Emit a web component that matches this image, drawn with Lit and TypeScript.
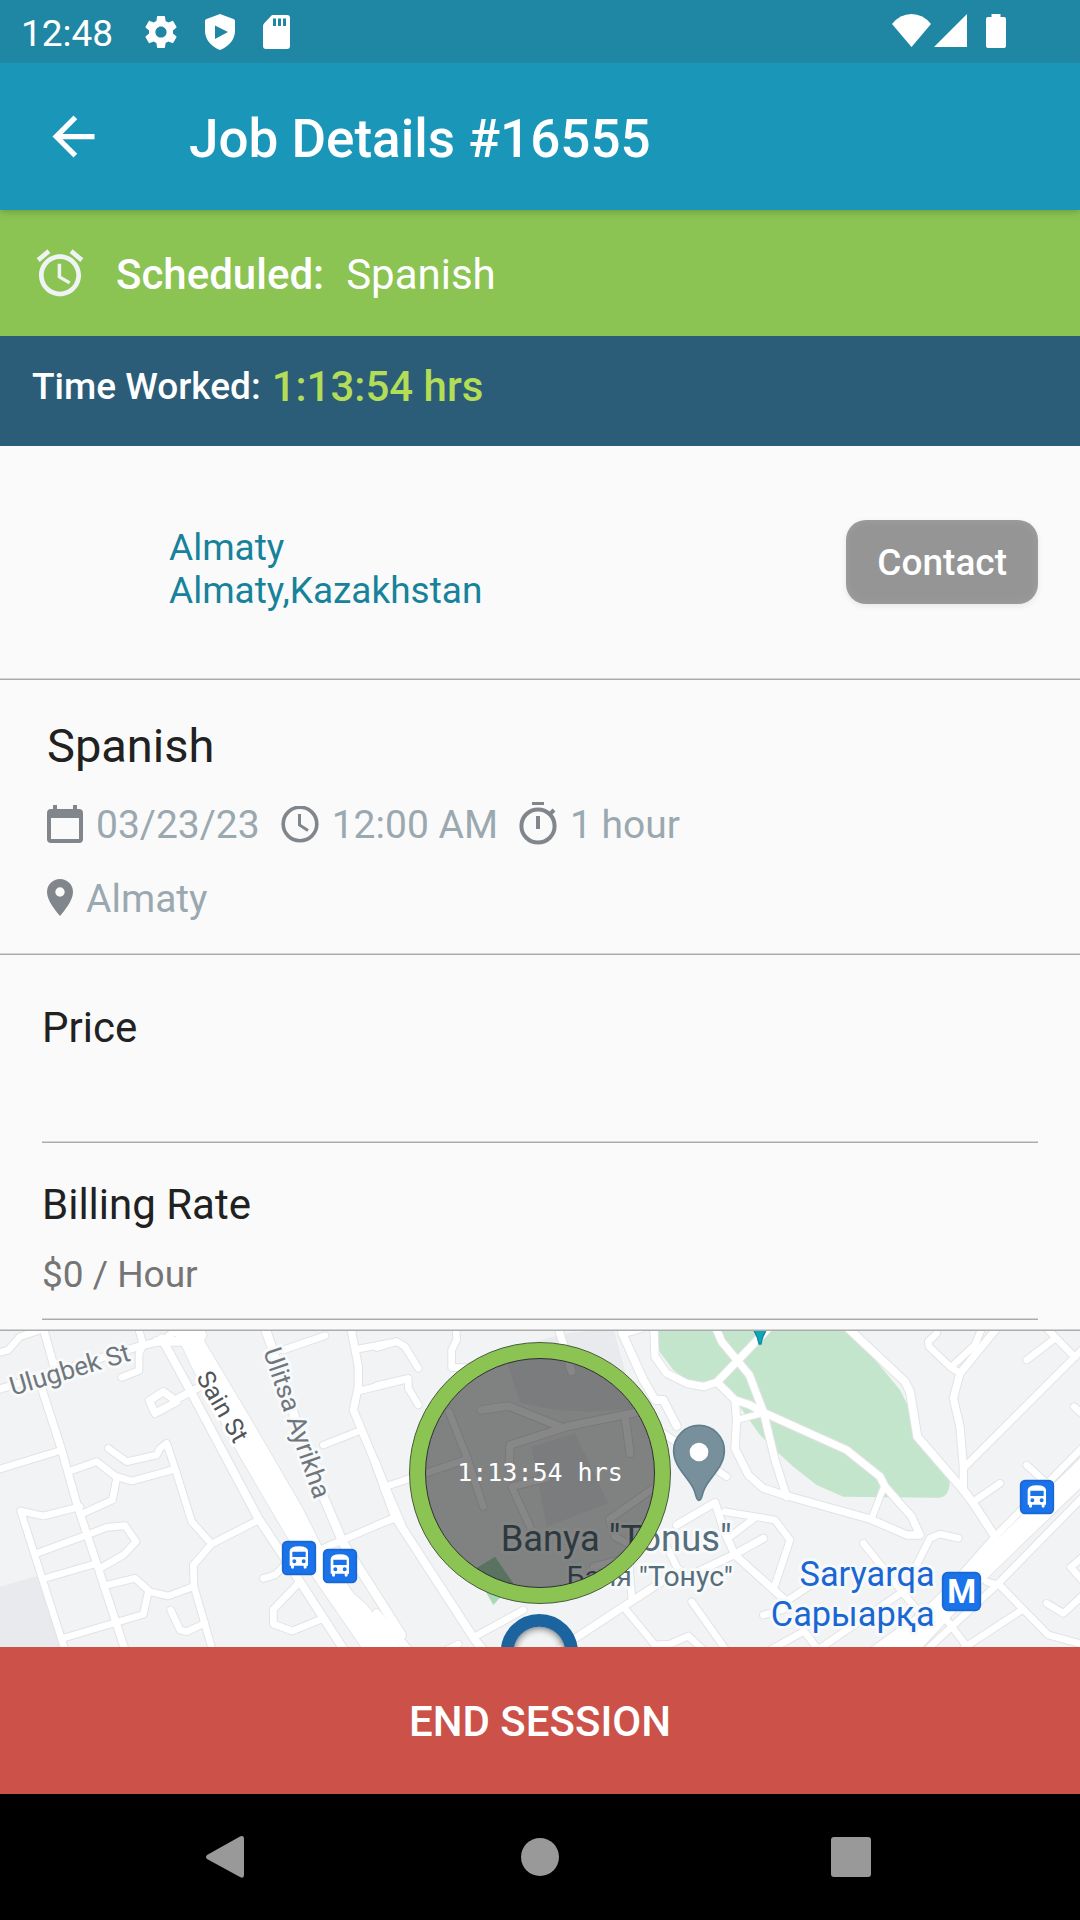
import { LitElement, html, svg, css } from "lit";
import { customElement, property } from "lit/decorators.js";

/* Streets are drawn on a 3240 x 948 grid, in three sheets with their own x origin. */
type Road = [width: number, d: string];
interface Sheet {
  dx: number;
  roads: Road[];
}

const SHEETS: Sheet[] = [
  {
    dx: 0,
    roads: [
      [20, "M-10 100 L25 90 L60 50 L115 32"],
      [22, "M130 25 L165 150 M125 205 L185 390 L230 550 L290 730 L375 990"],
      [22, "M-10 210 L420 78 L490 62 L530 30"],
      [20, "M415 25 L430 75 L417 100 L417 152 L365 172"],
      [24, "M485 55 L570 210 L775 595 L900 785 L1032 990"],
      [26, "M470 64 L560 64"],
      [22, "M600 200 L525 240 L490 215 L448 242 L465 280 L530 245"],
      [20, "M-10 450 L180 392"],
      [20, "M205 455 L290 425 L345 468 L395 483 L525 448"],
      [20, "M325 385 L380 425 L470 405 L480 385 L500 370 L525 445 L575 605 L635 672 L580 735 L582 800 L637 990"],
      [20, "M350 475 L337 540 L250 580"],
      [20, "M240 560 L130 588 L62 573 L195 990"],
      [20, "M110 700 L265 643 L320 622 L375 617 L408 665 L370 705 L300 745"],
      [20, "M135 775 L290 730"],
      [20, "M310 798 L405 775 L450 815 L505 828 L580 800"],
      [20, "M445 815 L430 883 L195 953"],
      [20, "M512 870 L540 930 L560 935 L615 910"],
      [20, "M635 672 L775 600"],
      [20, "M790 775 L825 765 L850 740"],
      [20, "M900 785 L820 868 L820 912 L877 933 L970 895"],
      [26, "M795 25 L815 80 L880 280 L970 530 L1030 670 L1205 945"],
      [20, "M850 90 L975 47"],
      [22, "M1053 25 L1075 140 L1075 200 L1060 270 L1160 510 L1205 615"],
      [20, "M1070 88 L1190 65 M1080 212 L1210 180 M970 375 L1085 330 M970 685 L1190 590"],
    ],
  },
  {
    dx: 1140,
    roads: [
      [20, "M-10 83 L50 65 L75 80 L115 145"],
      [20, "M-10 197 L85 175 L85 205 L115 255"],
      [20, "M228 25 L230 60 L215 90 L215 143 L280 143"],
      [22, "M535 25 L575 155"],
      [20, "M207 275 L260 410 L310 560"],
      [22, "M303 270 L385 258 L540 320 M388 440 L390 375 L560 320 L780 275 M735 285 L750 400"],
      [20, "M10 502 L255 420"],
      [24, "M-15 425 L45 590 L285 960 L310 990"],
      [20, "M-10 615 L45 595"],
      [24, "M-10 880 L85 990"],
      [20, "M285 950 L430 870 M235 972 L200 990"],
      [20, "M395 500 L450 620 M395 500 L500 475 M820 505 L688 598 L705 650 L770 685"],
      [20, "M640 740 L710 722"],
      [24, "M780 25 L727 40 L790 180 L825 240 L850 240 L890 318"],
      [22, "M822 25 L825 110 L860 160 L920 190 L970 200 L1010 187 L1070 125 L1165 25"],
      [22, "M1008 25 L1025 65 L1108 165 L1150 275 L1185 420 L1220 530"],
      [22, "M1015 190 L1065 240 L1110 255 L1145 275 L1400 390 L1500 470 L1515 500 L1595 590 L1620 645 L1580 645 L1470 597 L1220 527 L1150 505 L1105 465 L1065 385 L1070 300 L1065 240"],
      [18, "M1070 300 L1145 280 M1510 505 L1475 595"],
      [20, "M850 340 L1040 470"],
      [22, "M890 615 L1005 548 L1035 640 L1065 705 L1215 840"],
      [20, "M1035 575 L1185 600 L1230 660 L1180 810"],
      [20, "M1050 650 L1120 597"],
      [22, "M540 985 L730 860 L900 750 M880 790 L1060 705 L1150 655"],
      [20, "M730 860 L825 975 L870 972 L925 948 L970 990"],
      [20, "M755 830 L748 740 M850 660 L890 740"],
      [20, "M935 845 L1038 990"],
    ],
  },
  {
    dx: 2040,
    roads: [
      [24, "M505 25 L675 185 L690 215 L712 350 L850 510 L880 550 L945 650"],
      [20, "M770 40 L745 65 L747 80 L810 140 L840 160"],
      [20, "M905 25 L885 75 L815 140"],
      [22, "M950 25 L840 160 L820 235 L840 320 L850 440 L850 510"],
      [20, "M1100 25 L1185 112 M1210 85 L855 440"],
      [20, "M1125 55 L1040 120 M1182 260 L1210 285 M1040 435 L1100 490 M960 490 L880 545"],
      [20, "M580 990 L760 860 L945 650 L1210 380"],
      [20, "M740 990 L950 795 L1210 530"],
      [20, "M1215 705 L1172 742 L1215 790 M1100 850 L1150 880 L1215 820"],
      [20, "M850 985 L1025 870 M920 785 L960 797 L1105 945 L1215 975"],
      [20, "M800 900 L865 985"],
      [20, "M550 670 L670 820 L720 880 M835 655 L780 642 L750 655 L705 745"],
      [20, "M310 850 L400 790 M250 885 L310 868"],
      [20, "M370 930 L415 990 M690 800 L420 985 M370 935 L270 990"],
    ],
  },
];

const MOTORWAYS = [
  "M510 25 L545 75 L575 140 L700 375 L850 632 L935 765 L1090 990 L1208 990 L1100 855 L1060 820 L965 680 L905 560 L745 285 L612 62 L620 45 L610 25 Z",
  "M2640 990 L3000 650 L3250 405 L3250 495 L2950 785 L2760 990 Z",
];

const BUS_STOPS = [
  [846, 663],
  [969, 687],
  [3060, 480],
];

const strokes = (kind: string, extra: number) =>
  SHEETS.map(
    (s) => svg`<g class=${kind} transform="translate(${s.dx} 0)">
      ${s.roads.map(([w, d]) => svg`<path d=${d} stroke-width=${w + extra}></path>`)}
    </g>`
  );

const busStop = (x: number, y: number) => svg`<g transform="translate(${x} ${y})">
  <rect class="stop" x="2" y="2" width="98" height="98" rx="13"></rect>
  <path fill="#fff" fill-rule="evenodd" d="M23 30 Q24 16 51 16 Q77 16 78 30 V74 H74 V79 Q74 83 69 83 Q65 83 65 79 V74 H36 V79 Q36 83 32 83 Q27 83 27 79 V74 H23 Z M31 32 V48 H71 V32 Z M37 55 A6 6 0 1 0 37 67 A6 6 0 1 0 37 55 Z M65 55 A6 6 0 1 0 65 67 A6 6 0 1 0 65 55 Z"></path>
</g>`;

@customElement("job-map")
export class JobMap extends LitElement {
  @property() elapsed = "";

  static styles = css`
    :host {
      display: block;
      position: relative;
      overflow: hidden;
      background: #f1f3f4;
    }
    .canvas {
      display: block;
      width: 100%;
      height: 100%;
      position: absolute;
      inset: 0;
    }
    .casing,
    .surface {
      fill: none;
      stroke-linejoin: round;
      stroke-linecap: round;
    }
    .casing {
      stroke: #e1e3e6;
    }
    .surface {
      stroke: #fff;
    }
    .label {
      font-family: Roboto, sans-serif;
      paint-order: stroke;
      stroke: #f8f9fa;
      stroke-width: 18px;
      stroke-linejoin: round;
    }
    .street {
      font-size: 78px;
      fill: #6f777c;
    }
    .avenue {
      font-size: 75px;
      fill: #50555a;
      stroke: #fff;
    }
    .place {
      font-size: 109px;
      fill: #546e7a;
    }
    .place-local {
      font-size: 85px;
      fill: #546e7a;
    }
    .metro {
      font-size: 103px;
      fill: #1967d2;
      text-anchor: end;
    }
    .metro-sign {
      font: 700 99px Roboto, sans-serif;
      fill: #fff;
      text-anchor: middle;
    }
    .stop {
      fill: #1a73e8;
      stroke: #1967d2;
      stroke-width: 5px;
    }
    .timer {
      position: absolute;
      top: 11px;
      left: 50%;
      transform: translateX(-50%);
      box-sizing: border-box;
      width: 262px;
      height: 262px;
      border: 1px solid #4a5a3a;
      border-radius: 50%;
      background: radial-gradient(circle, transparent 114px, #8bc453 115px);
      display: grid;
      place-items: center;
    }
    .dial {
      box-sizing: border-box;
      width: 230px;
      height: 230px;
      border: 1px solid #2c2f2c;
      border-radius: 50%;
      background: rgba(0, 0, 0, 0.47);
      color: #fff;
      font: 25px/30px "DejaVu Sans Mono", monospace;
      display: grid;
      place-items: center;
      white-space: nowrap;
    }
  `;

  render() {
    return html`
      <svg class="canvas" viewBox="0 33 3240 948" preserveAspectRatio="xMidYMid slice" aria-hidden="true">
        <defs>
          <radialGradient id="ring-shade" cx="0.5" cy="0.5" r="0.5">
            <stop offset="0.6" stop-color="#fff" stop-opacity="0"></stop>
            <stop offset="1" stop-color="#555" stop-opacity="0.6"></stop>
          </radialGradient>
        </defs>
        <path fill="#e8eaed" d="M0 800 L120 765 L190 990 L0 990 Z"></path>
        <path fill="#e8eaed" d="M1510 90 L1700 40 L1840 25 L1880 170 L1905 265 Q1700 290 1560 247 Z"></path>
        <path fill="#e8eaed" d="M1595 380 L1725 340 L1825 550 L1640 620 Z"></path>
        <path fill="#a8dab5" d="M1420 750 L1485 710 L1540 790 L1480 855 Z"></path>
        <path
          fill="#c3e5cc"
          d="M1975 25 L2540 25 L2630 125 L2700 210 L2730 270 L2750 350 L2850 470 L2848 500 Q2842 533 2815 533 L2530 530 L2450 495 L2380 440 L2320 385 L2280 345 L2220 260 L2160 190 L2060 180 L2020 150 L1975 90 Z"
        ></path>
        ${strokes("casing", 6)}
        ${MOTORWAYS.map((d) => svg`<path d=${d} fill="#fff" stroke="#e1e3e6" stroke-width="5"></path>`)}
        ${strokes("surface", 0)}
        ${MOTORWAYS.map((d) => svg`<path d=${d} fill="#fff"></path>`)}

        <text class="label street" transform="translate(38 227) rotate(-16.5)">Ulugbek St</text>
        <text class="label avenue" transform="translate(587 172) rotate(60)">Sain St</text>
        <text class="label street" transform="translate(789 94) rotate(71)">Ulitsa Ayrikha</text>
        ${BUS_STOPS.map(([x, y]) => busStop(x, y))}

        <path fill="#12a5b8" stroke="#0b8d9e" stroke-width="4" d="M2258 25 Q2274 50 2277 72 H2283 Q2286 50 2302 25 Z"></path>
        <path
          fill="#78909c"
          stroke="#5f7f8c"
          stroke-width="5"
          d="M2097 541 C2087 541 2090 525 2080 505 C2062 468 2021 440 2021 392 A76 76 0 0 1 2173 392 C2173 440 2132 468 2114 505 C2104 525 2107 541 2097 541 Z"
        ></path>
        <circle cx="2097" cy="396" r="28" fill="#fff"></circle>

        <text class="label place" x="1502" y="692">Banya "Tonus"</text>
        <text class="label place-local" x="1700" y="797">Баня "Тонус"</text>
        <text class="label metro" x="2804" y="797">Saryarqa</text>
        <text class="label metro" x="2804" y="917">Сарыарқа</text>
        <rect class="stop" x="2828" y="758" width="113" height="113" rx="15"></rect>
        <text class="metro-sign" x="2885" y="849">M</text>

        <circle cx="1618" cy="1000" r="80" fill="url(#ring-shade)"></circle>
        <circle cx="1618" cy="998" r="97" fill="none" stroke="#1c64a0" stroke-width="38"></circle>
      </svg>
      <div class="timer"><div class="dial">${this.elapsed}</div></div>
    `;
  }
}

@customElement("app-root")
export class AppRoot extends LitElement {
  @property() elapsed = "1:13:54 hrs";

  static styles = css`
    :host {
      display: flex;
      flex-direction: column;
      min-height: 100vh;
      background: #fafafa;
      color: #212121;
      font-family: Roboto, sans-serif;
      font-size: 42px;
      line-height: 50px;
    }
    * {
      box-sizing: border-box;
    }
    svg {
      display: block;
      flex: none;
    }
    button {
      border: 0;
      padding: 0;
      background: none;
      color: inherit;
      font: inherit;
      cursor: pointer;
    }
    h1,
    h2,
    p {
      margin: 0;
      font: inherit;
    }
    .status {
      position: relative;
      z-index: 2;
      display: flex;
      align-items: center;
      justify-content: space-between;
      height: 63px;
      padding: 0 74px 0 21px;
      background: #1f86a3;
      color: #fff;
      font-size: 37px;
      line-height: 44px;
    }
    .status-group {
      display: flex;
      align-items: center;
    }
    .notices {
      gap: 28px;
    }
    .clock {
      padding: 4px 4px 0 0;
    }
    .bar {
      position: relative;
      z-index: 1;
      display: flex;
      align-items: center;
      gap: 84px;
      padding: 42px;
      background: #1a97b8;
      color: #fff;
      box-shadow: 0 1px 8px rgba(0, 0, 0, 0.25);
    }
    .title {
      padding-top: 5px;
      font-weight: 500;
      font-size: 53px;
      line-height: 58px;
    }
    .scheduled {
      display: flex;
      align-items: center;
      gap: 27px;
      padding: 35px 32px;
      background: #8bc453;
      color: #fff;
    }
    .scheduled-text {
      display: flex;
      gap: 22px;
      padding: 4px 0 0 1px;
    }
    .strong {
      font-weight: 500;
    }
    .worked {
      display: flex;
      align-items: center;
      gap: 11px;
      padding: 26px 32px 34px;
      background: #2b5d79;
      color: #fff;
      font-weight: 500;
      font-size: 37px;
    }
    .worked-value {
      color: #b3dc57;
      font-size: 42px;
    }
    .customer {
      display: flex;
      justify-content: space-between;
      align-items: center;
      padding: 66px 42px 66px 169px;
    }
    .address {
      padding-top: 14px;
      color: #17829b;
      font-size: 37px;
      line-height: 43px;
      text-decoration: none;
    }
    .contact {
      padding: 21px 31px 19px;
      border-radius: 20px;
      background: #959595;
      box-shadow: 0 2px 6px rgba(0, 0, 0, 0.08), inset 0 0 8px rgba(255, 255, 255, 0.12);
      color: #fff;
      font-weight: 500;
      font-size: 37px;
      line-height: 44px;
    }
    .rule {
      height: 2px;
      margin: 0;
      border: 0;
      border-top: 1px solid #d3d3d3;
      border-bottom: 1px solid #acacac;
    }
    .job {
      display: flex;
      flex-direction: column;
      gap: 28px;
      padding: 38px 47px 31px;
      color: #9aa8b0;
      font-size: 39px;
      line-height: 46px;
    }
    .job-name {
      color: #212121;
      font-size: 47px;
      line-height: 56px;
    }
    .meta {
      display: flex;
      gap: 21px;
    }
    .meta-item {
      display: flex;
      align-items: center;
      gap: 13px;
    }
    .icon {
      color: #80868b;
    }
    .rows {
      padding: 0 42px 9px;
    }
    .price {
      padding: 48px 0 88px;
    }
    .billing {
      display: flex;
      flex-direction: column;
      gap: 23px;
      padding: 37px 0 21px;
    }
    .rate {
      color: #757575;
      font-size: 37px;
      line-height: 44px;
    }
    .map {
      flex: 1 0 316px;
    }
    .end {
      padding: 50px 32px 47px;
      background: #cb5149;
      color: #fff;
      font-weight: 500;
      text-align: center;
    }
    .nav {
      display: flex;
      justify-content: space-between;
      padding: 33px 18%;
      background: #000;
      color: #999;
    }
  `;

  render() {
    return html`
      <div class="status">
        <div class="status-group notices">
          <span class="clock">12:48</span>
          <svg width="32" height="34" viewBox="2 2 20 20" fill="#fff">
            <path d="M19.43 12.98c.04-.32.07-.64.07-.98s-.03-.66-.07-.98l2.11-1.65c.19-.15.24-.42.12-.64l-2-3.46c-.12-.22-.39-.3-.61-.22l-2.49 1c-.52-.4-1.08-.73-1.69-.98l-.38-2.65C14.46 2.18 14.25 2 14 2h-4c-.25 0-.46.18-.49.42l-.38 2.65c-.61.25-1.17.59-1.69.98l-2.49-1c-.23-.09-.49 0-.61.22l-2 3.46c-.13.22-.07.49.12.64l2.11 1.65c-.04.32-.07.65-.07.98s.03.66.07.98l-2.11 1.65c-.19.15-.24.42-.12.64l2 3.46c.12.22.39.3.61.22l2.49-1c.52.4 1.08.73 1.69.98l.38 2.65c.03.24.24.42.49.42h4c.25 0 .46-.18.49-.42l.38-2.65c.61-.25 1.17-.59 1.69-.98l2.49 1c.23.09.49 0 .61-.22l2-3.46c.12-.22.07-.49-.12-.64l-2.11-1.65zM12 15.5c-1.93 0-3.5-1.57-3.5-3.5s1.57-3.5 3.5-3.5 3.5 1.57 3.5 3.5-1.57 3.5-3.5 3.5z"></path>
          </svg>
          <svg width="30" height="36" viewBox="0 0 30 36" fill="#fff">
            <path fill-rule="evenodd" d="M15 0 L28.5 5 Q30 5.6 30 7 V17 C30 26 23 33 15 36 C7 33 0 26 0 17 V7 Q0 5.6 1.5 5 Z M10 11.5 V25 L23 18 Z"></path>
          </svg>
          <svg width="28" height="34" viewBox="0 0 28 34" fill="#fff">
            <path fill-rule="evenodd" d="M9.5 0 H24 Q27 0 27 3 V31 Q27 34 24 34 H3 Q0 34 0 31 V11 Q0 9.5 1 8.5 L8 1 Q8.8 0 9.5 0 Z M10 3.5 V11 H13 V3.5 Z M15 3.5 V11 H18 V3.5 Z M20 3.5 V11 H23 V3.5 Z"></path>
          </svg>
        </div>
        <svg width="114" height="36" viewBox="892 14 114 36" fill="#fff">
          <path d="M892 24 Q900 14 911.5 14 Q923 14 931 24 L911.5 47 Z"></path>
          <path d="M967 14 V47 H934 Z"></path>
          <path d="M991.5 14 H1000.5 V17 H1004 Q1006 17 1006 19 V46 Q1006 48 1004 48 H988 Q986 48 986 46 V19 Q986 17 988 17 H991.5 Z"></path>
        </svg>
      </div>

      <header class="bar">
        <button aria-label="Back">
          <svg width="63" height="63" viewBox="0 0 24 24" fill="#fff">
            <path d="M20 11H7.83l5.59-5.59L12 4l-8 8 8 8 1.41-1.41L7.83 13H20v-2z"></path>
          </svg>
        </button>
        <h1 class="title">Job Details #16555</h1>
      </header>

      <section class="scheduled">
        <svg width="56" height="56" viewBox="0 0 24 24" fill="#f0f3f6">
          <path d="M22 5.72l-4.6-3.86-1.29 1.53 4.6 3.86L22 5.72zM7.88 3.39L6.6 1.86 2 5.71l1.29 1.53 4.59-3.85zM12.5 8H11v6l4.75 2.85.75-1.23-4-2.37V8zM12 4c-4.97 0-9 4.03-9 9s4.02 9 9 9c4.97 0 9-4.03 9-9s-4.03-9-9-9zm0 16c-3.87 0-7-3.13-7-7s3.13-7 7-7 7 3.13 7 7-3.13 7-7 7z"></path>
        </svg>
        <p class="scheduled-text"><span class="strong">Scheduled:</span><span>Spanish</span></p>
      </section>

      <section class="worked">
        <span>Time Worked:</span><span class="worked-value">${this.elapsed}</span>
      </section>

      <section class="customer">
        <a class="address" href="#map">Almaty<br />Almaty,Kazakhstan</a>
        <button class="contact">Contact</button>
      </section>
      <hr class="rule" />

      <section class="job">
        <h2 class="job-name">Spanish</h2>
        <div class="meta">
          <span class="meta-item">
            <svg class="icon" width="36" height="40" viewBox="0 0 36 40" fill="currentColor">
              <path fill-rule="evenodd" d="M6 0 H10 V4 H26 V0 H30 V4 H32 Q36 4 36 8 V34 Q36 38 32 38 H4 Q0 38 0 34 V8 Q0 4 4 4 H6 Z M4 13 V34 H32 V13 Z"></path>
            </svg>
            03/23/23
          </span>
          <span class="meta-item">
            <svg class="icon" width="38" height="38" viewBox="0 0 38 38" fill="none" stroke="currentColor">
              <circle cx="19" cy="18" r="16.8" stroke-width="3.6"></circle>
              <path d="M18.5 8 V19 L27 24.5" stroke-width="3"></path>
            </svg>
            12:00 AM
          </span>
          <span class="meta-item">
            <svg class="icon" width="38" height="46" viewBox="0 0 38 46" fill="none" stroke="currentColor">
              <circle cx="19" cy="24" r="16.6" stroke-width="4"></circle>
              <path d="M13 1 H25 M19 14 V27 M31 12 L35 8" stroke-width="4"></path>
            </svg>
            1 hour
          </span>
        </div>
        <span class="meta-item">
          <svg class="icon" width="26" height="40" viewBox="0 0 26 40" fill="currentColor">
            <path fill-rule="evenodd" d="M13 0 A13 13 0 0 1 26 13 C26 22 17 32 13 37 C9 32 0 22 0 13 A13 13 0 0 1 13 0 Z M13 8.3 A4.7 4.7 0 1 0 13 17.7 A4.7 4.7 0 1 0 13 8.3 Z"></path>
          </svg>
          Almaty
        </span>
      </section>
      <hr class="rule" />

      <section class="rows">
        <h2 class="price">Price</h2>
        <hr class="rule" />
        <div class="billing">
          <h2>Billing Rate</h2>
          <p class="rate">$0 / Hour</p>
        </div>
        <hr class="rule" />
      </section>
      <hr class="rule" />

      <job-map class="map" id="map" .elapsed=${this.elapsed}></job-map>
      <button class="end">END SESSION</button>

      <nav class="nav">
        <button aria-label="System back">
          <svg width="60" height="60" viewBox="0 0 60 60" fill="currentColor">
            <path d="M13 28 L46 9.5 Q50 8 50 12 V48 Q50 52 46 50 L13 32 Q11 30 13 28 Z"></path>
          </svg>
        </button>
        <button aria-label="Home">
          <svg width="60" height="60" viewBox="0 0 60 60" fill="currentColor"><circle cx="30" cy="30" r="19"></circle></svg>
        </button>
        <button aria-label="Recent apps">
          <svg width="60" height="60" viewBox="0 0 60 60" fill="currentColor"><rect x="5" y="10" width="40" height="40" rx="3"></rect></svg>
        </button>
      </nav>
    `;
  }
}
